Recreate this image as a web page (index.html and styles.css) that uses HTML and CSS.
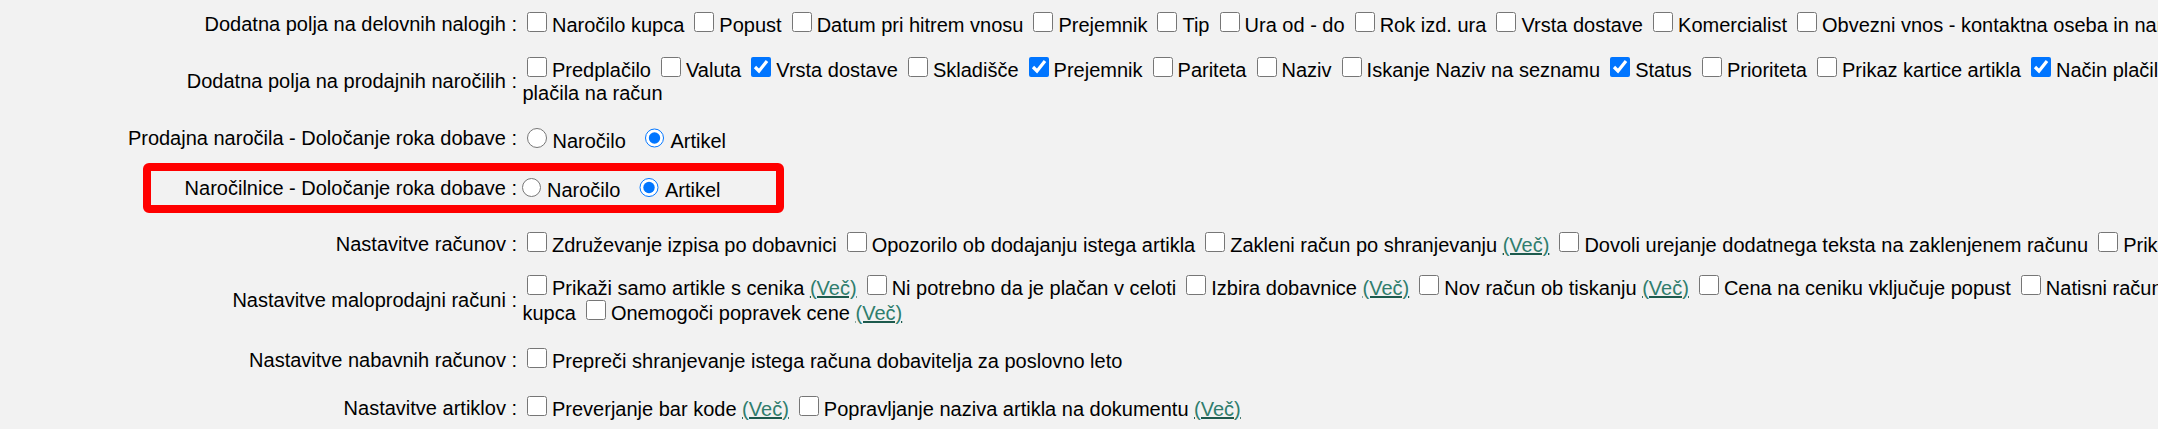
FILE: index.html
```html
<!DOCTYPE html>
<html lang="sl">
<head>
<meta charset="utf-8">
<title>Nastavitve</title>
<link rel="stylesheet" href="styles.css">
</head>
<body>
<div class="page">
  <table class="settings">
    <colgroup><col class="col-label"><col class="col-value"></colgroup>
    <tr>
      <td class="label">Dodatna polja na delovnih nalogih :</td>
      <td class="value"><input type="checkbox" class="chk">Naročilo kupca <input type="checkbox" class="chk">Popust <input type="checkbox" class="chk">Datum pri hitrem vnosu <input type="checkbox" class="chk">Prejemnik <input type="checkbox" class="chk">Tip <input type="checkbox" class="chk">Ura od - do <input type="checkbox" class="chk">Rok izd. ura <input type="checkbox" class="chk">Vrsta dostave <input type="checkbox" class="chk">Komercialist <input type="checkbox" class="chk">Obvezni vnos - kontaktna oseba in naročnik</td>
    </tr>
    <tr>
      <td class="label">Dodatna polja na prodajnih naročilih :</td>
      <td class="value"><input type="checkbox" class="chk">Predplačilo <input type="checkbox" class="chk">Valuta <input type="checkbox" class="chk" checked>Vrsta dostave <input type="checkbox" class="chk">Skladišče <input type="checkbox" class="chk" checked>Prejemnik <input type="checkbox" class="chk">Pariteta <input type="checkbox" class="chk">Naziv <input type="checkbox" class="chk">Iskanje Naziv na seznamu <input type="checkbox" class="chk" checked>Status <input type="checkbox" class="chk">Prioriteta <input type="checkbox" class="chk">Prikaz kartice artikla <input type="checkbox" class="chk" checked>Način plačila <input type="checkbox" class="chk">Tiskanje plačila na račun</td>
    </tr>
    <tr>
      <td class="label">Prodajna naročila - Določanje roka dobave :</td>
      <td class="value"><label class="opt"><input type="radio" class="rad" name="rok1">Naročilo</label> <label class="opt"><input type="radio" class="rad" name="rok1" checked>Artikel</label></td>
    </tr>
    <tr class="marked">
      <td class="label">Naročilnice - Določanje roka dobave :</td>
      <td class="value"><label class="opt"><input type="radio" class="rad" name="rok2">Naročilo</label> <label class="opt"><input type="radio" class="rad" name="rok2" checked>Artikel</label></td>
    </tr>
    <tr class="tight-bottom">
      <td class="label">Nastavitve računov :</td>
      <td class="value"><input type="checkbox" class="chk">Združevanje izpisa po dobavnici <input type="checkbox" class="chk">Opozorilo ob dodajanju istega artikla <input type="checkbox" class="chk">Zakleni račun po shranjevanju <a class="more" href="#">(Več)</a> <input type="checkbox" class="chk">Dovoli urejanje dodatnega teksta na zaklenjenem računu <input type="checkbox" class="chk">Prikaži popust</td>
    </tr>
    <tr>
      <td class="label">Nastavitve maloprodajni računi :</td>
      <td class="value"><input type="checkbox" class="chk">Prikaži samo artikle s cenika <a class="more" href="#">(Več)</a> <input type="checkbox" class="chk">Ni potrebno da je plačan v celoti <input type="checkbox" class="chk">Izbira dobavnice <a class="more" href="#">(Več)</a> <input type="checkbox" class="chk">Nov račun ob tiskanju <a class="more" href="#">(Več)</a> <input type="checkbox" class="chk">Cena na ceniku vključuje popust <input type="checkbox" class="chk">Natisni račun z naslovom kupca <input type="checkbox" class="chk">Onemogoči popravek cene <a class="more" href="#">(Več)</a></td>
    </tr>
    <tr class="loose-top">
      <td class="label">Nastavitve nabavnih računov :</td>
      <td class="value"><input type="checkbox" class="chk">Prepreči shranjevanje istega računa dobavitelja za poslovno leto</td>
    </tr>
    <tr class="loose-top">
      <td class="label">Nastavitve artiklov :</td>
      <td class="value"><input type="checkbox" class="chk">Preverjanje bar kode <a class="more" href="#">(Več)</a> <input type="checkbox" class="chk">Popravljanje naziva artikla na dokumentu <a class="more" href="#">(Več)</a></td>
    </tr>
  </table>
  <div class="highlight"></div>
</div>
</body>
</html>
```
FILE: styles.css
```css
html, body {
  margin: 0;
  padding: 0;
  background: #f2f2f2;
}
body {
  font-family: "Liberation Sans", Arial, sans-serif;
  font-size: 20px;
  color: #000;
}
.page {
  position: relative;
  width: 2400px;
}
.settings {
  table-layout: fixed;
  width: 2320px;
  border-collapse: separate;
  border-spacing: 0;
  margin-top: 2px;
}
.col-label { width: 517px; }
.settings td {
  padding: 10px 0;
  vertical-align: middle;
}
.settings .marked td {
  padding: 12px 0 20px;
}
.settings .tight-bottom td {
  padding-bottom: 8px;
}
.settings .loose-top td {
  padding-top: 13px;
}
.label {
  text-align: right;
  white-space: nowrap;
}
.settings .value {
  padding-left: 5.5px;
}
.chk {
  width: 20px;
  height: 20px;
  margin: 0 5px 0 4.5px;
  vertical-align: baseline;
}
.rad {
  width: 19.5px;
  height: 19.5px;
  margin: 3px 6px 0 4.5px;
  vertical-align: baseline;
}
.opt + .opt {
  margin-left: 9px;
}
.more {
  color: #2f7d6d;
  text-decoration: underline;
  text-decoration-color: #1d5a4d;
}
.highlight {
  position: absolute;
  left: 143px;
  top: 161px;
  width: 641px;
  height: 50px;
  box-sizing: border-box;
  border: 8px solid #ff0000;
  border-radius: 6px;
  pointer-events: none;
}
```
